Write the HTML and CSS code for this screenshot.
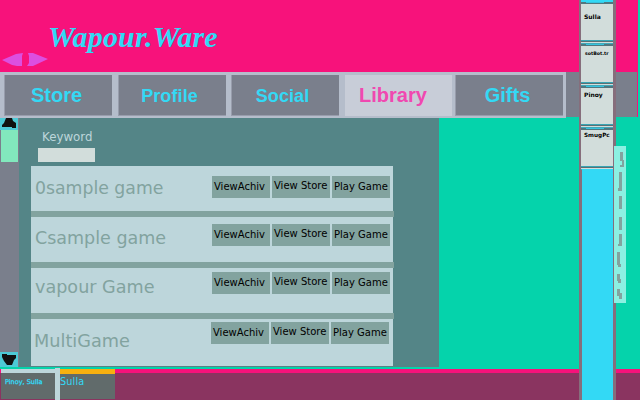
FILE: index.html
```html
<!DOCTYPE html>
<html lang="en">
<head>
<meta charset="utf-8">
<title>Wapour.Ware</title>
<link rel="stylesheet" href="styles.css">
</head>
<body>
<div class="app">
  <header class="header">
    <svg class="arrows" viewBox="0 0 46 14"><path fill="#dc4fe0" d="M0 7 14 1 21 0 20 3V13H15L10 12ZM26 0H31L46 6 31 13H25L27 10V3Z"/></svg>
    <h1 class="brand">Wapour.Ware</h1>
  </header>
  <div class="navbar">
    <nav class="tabs">
      <a class="tab">Store</a>
      <a class="tab mid">Profile</a>
      <a class="tab mid">Social</a>
      <a class="tab active">Library</a>
      <a class="tab">Gifts</a>
    </nav>
    <div class="nav-end"></div>
  </div>
  <main class="main">
    <div class="scroll">
      <div class="up"><svg viewBox="0 0 18 12"><path fill="#111" d="M6 0H12L13 3 16 5V10H12V9H2V7L4 5Z"/></svg></div>
      <div class="thumb"></div>
      <div class="down"><svg viewBox="0 0 18 15"><path fill="#111" d="M2 2H7V3H16V6L14 8 12 13H7L4 9 2 5Z"/></svg></div>
    </div>
    <section class="library">
      <label class="keyword">Keyword</label>
      <div class="input"></div>
      <div class="list">
        <div class="row r1"><span class="name">0sample game</span><div class="buttons"><b>ViewAchiv</b><b class="store">View Store</b><b>Play Game</b></div></div>
        <div class="row r2"><span class="name">Csample game</span><div class="buttons"><b>ViewAchiv</b><b class="store">View Store</b><b>Play Game</b></div></div>
        <div class="row r3"><span class="name">vapour Game</span><div class="buttons"><b>ViewAchiv</b><b class="store">View Store</b><b>Play Game</b></div></div>
        <div class="row r4"><span class="name">MultiGame</span><div class="buttons"><b>ViewAchiv</b><b class="store">View Store</b><b>Play Game</b></div></div>
      </div>
    </section>
  </main>
  <footer class="footer">
    <div class="chat first">Pinoy, Sulla</div>
    <div class="divider"></div>
    <div class="chat second">Sulla</div>
  </footer>
  <aside class="friends">
    <div class="friend f1"><span>Sulla</span></div>
    <div class="friend f2"><span>sotBot.tr</span></div>
    <div class="friend f3"><span>Pinoy</span></div>
    <div class="friend f4"><span>SmugPc</span></div>
    <div class="pool"></div>
  </aside>
  <div class="handle"><svg viewBox="0 0 12 157" shape-rendering="crispEdges"><path fill="#82a39f" d="M6 6H9V14H10V21H6V19H8V15H6ZM5 26H8V45H4V42H5ZM5 50H8V63H5ZM5 71H8V84H5ZM5 88H8V100H4V98H5ZM3 106H6V118H7V121H4V119H3ZM3 128H6V133H7V137H4V135H3ZM3 143H6V147H8V153H5V150H3Z"/></svg></div>
</div>
</body>
</html>
```

FILE: styles.css
```css
* { box-sizing: border-box; }
body { margin: 0; font-family: "DejaVu Sans", sans-serif; }
svg { display: block; }
.app { position: relative; width: 640px; height: 400px; overflow: hidden; background: #05d3ab; display: flex; flex-direction: column; }
.header { width: 638px; height: 72px; background: #f7127b; display: flex; align-items: flex-start; }
.arrows { width: 46px; height: 14px; margin: 53px 0 0 2px; }
.brand { margin: 20px 0 0 0; font: italic bold 30px/34px "Liberation Serif", serif; letter-spacing: 0.15px; color: #33d9f5; }
.navbar { display: flex; height: 46px; width: 638px; }
.tabs { width: 566px; height: 46px; background: #b5bdcb; padding: 3px 3px 0 4px; display: grid; grid-template-columns: 114px 113px 114px 110px 108px; }
.tab { width: 108px; height: 41px; background: #7a7f8c; border-left: 1px solid #989dac; border-bottom: 1px solid #989dac; font: bold 20px/40px "Liberation Sans", sans-serif; color: #33d9f5; text-align: center; padding-right: 4px; }
.mid { font-size: 18px; line-height: 42px; padding-right: 6px; letter-spacing: 0.1px; }
.active { width: 107px; background: #c8cdd8; color: #f048b0; border-color: #c8cdd8; padding-right: 12px; }
.nav-end { flex: 1; height: 45px; background: #7a7f8c; border-right: 1px solid #f7127b; }
.main { display: flex; height: 249px; }
.scroll { width: 19px; background: #7a7f8c; display: flex; flex-direction: column; }
.up { width: 18px; height: 12px; background: #4dc9d5; }
.thumb { width: 17px; height: 32px; margin-left: 1px; background: #82e8bd; }
.down { width: 18px; height: 15px; margin-top: auto; background: #4dc9d5; }
.library { width: 420px; background: #548587; padding-left: 12px; }
.keyword { display: block; height: 30px; padding: 11px 0 0 11px; font-size: 11.8px; line-height: 17px; color: #bdd6db; }
.input { width: 57px; height: 14px; margin-left: 7px; background: #d2dddb; }
.list { width: 363px; margin-top: 4px; }
.row { display: flex; height: 51px; border-bottom: 6px solid #82a39f; background: linear-gradient(90deg, #bdd6db 362px, #548587 362px); }
.name { width: 181px; padding-left: 4px; font-size: 17.5px; line-height: 43px; color: #82a39f; white-space: nowrap; }
.buttons { display: flex; gap: 2px; margin-top: 10px; height: 22px; }
.buttons b { width: 58px; background: #82a39f; font-size: 10px; font-weight: normal; line-height: 21px; padding-left: 2px; color: #000; white-space: nowrap; }
.buttons .store { line-height: 20px; }
.r1 .name { font-size: 17.3px; line-height: 45px; }
.r2 .buttons { margin-top: 7px; }
.r3 .buttons { margin-top: 4px; }
.r3 .name { font-size: 17.6px; line-height: 39px; }
.r4 { height: 47px; border-bottom: 0; }
.r4 .name { width: 180px; padding-left: 3px; line-height: 45px; font-size: 17.7px; }
.r4 .buttons { margin-top: 3px; }
.footer { height: 32px; margin-top: 1px; display: flex; padding-left: 1px; background: linear-gradient(#05d3ab 1px, #f7127b 1px 5px, #8a3460 5px); }
.chat { background: #616b6b; color: #33d9f5; white-space: nowrap; }
.first { width: 54px; height: 30px; margin-top: 1px; border-top: 4px solid #bdd6db; padding: 4px 0 0 4px; font-size: 6.5px; line-height: 10px; -webkit-text-stroke: 0.3px #33d9f5; }
.divider { width: 5px; height: 32px; background: #bdd6db; }
.second { width: 55px; height: 30px; margin-top: 1px; border-top: 5px solid #f7b010; font-size: 9.7px; line-height: 16px; letter-spacing: 0.15px; }
.friends { position: absolute; left: 579px; top: 0; width: 37px; height: 400px; padding: 2px 3px 0 2px; background: #866e7c; display: flex; flex-direction: column; }
.friends::before { content: ""; position: absolute; left: 2px; top: 0; width: 32px; height: 2px; background: #33d9f5; }
.friend { height: 42px; padding: 2px 0 0 3px; font-size: 6px; font-weight: bold; line-height: 8px; color: #000; white-space: nowrap; overflow: hidden; background: linear-gradient(90deg, #50777f 5px, #35c4df 5px 23px, #50777f 23px) 0 0/100% 1px no-repeat, linear-gradient(#50777f 2px, #d2dddb 2px 38px, #38a5b5 38px 39px, #5a7074 39px 40px, #d2dddb 40px 41px, #3fa9ba 41px); }
.friend span { display: block; }
.f1 span { margin-top: 9px; }
.f2 span { margin: 5px 0 0 1px; font-size: 4.7px; line-height: 6px; }
.f3 span { margin-top: 3px; }
.f4 span { margin: 1px 0 0 0; font-size: 5.7px; }
.pool { flex: 1; margin-left: 1px; margin-top: -1px; background: #33d9f5; }
.handle { position: absolute; left: 614px; top: 146px; width: 12px; height: 157px; background: #8cf0e2; }
```
